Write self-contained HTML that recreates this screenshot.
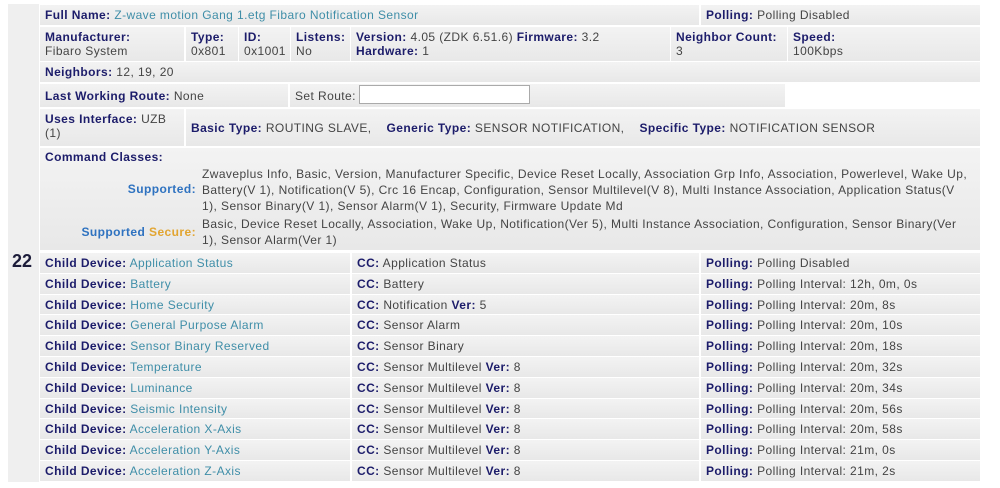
<!DOCTYPE html>
<html><head><meta charset="utf-8"><style>
body{margin:0;width:1000px;height:488px;background:#fff;font-family:"Liberation Sans",Arial,sans-serif;font-size:12px;letter-spacing:0.42px;color:#444;position:relative;overflow:hidden}
.c{position:absolute;background:linear-gradient(#f3f3f3,#e8e8e8);box-sizing:border-box;padding:0 5px;white-space:nowrap;line-height:14px}
b{color:#1c1c6a}
.l{color:#3f8ea8}
</style></head><body>
<div class="c" style="left:8px;top:4px;width:31px;height:478px;background:#efefef"></div>
<div style="position:absolute;left:12px;top:251px;font-weight:bold;font-size:18px;color:#1c1c3a;letter-spacing:0">22</div>

<div class="c" style="left:40px;top:5px;width:659px;height:20px;padding-top:3px"><b>Full Name:</b> <span class="l">Z-wave motion Gang 1.etg Fibaro Notification Sensor</span></div>
<div class="c" style="left:701px;top:5px;width:279px;height:20px;padding-top:3px"><b>Polling:</b> Polling Disabled</div>

<div class="c" style="left:40px;top:27px;width:144px;height:34px;padding-top:3px"><b>Manufacturer:</b><br>Fibaro System</div>
<div class="c" style="left:186px;top:27px;width:52px;height:34px;padding-top:3px"><b>Type:</b><br>0x801</div>
<div class="c" style="left:239px;top:27px;width:51px;height:34px;padding-top:3px"><b>ID:</b><br>0x1001</div>
<div class="c" style="left:291px;top:27px;width:59px;height:34px;padding-top:3px"><b>Listens:</b><br>No</div>
<div class="c" style="left:351px;top:27px;width:319px;height:34px;padding-top:3px"><b>Version:</b> 4.05 (ZDK 6.51.6) <b>Firmware:</b> 3.2<br><b>Hardware:</b> 1</div>
<div class="c" style="left:671px;top:27px;width:116px;height:34px;padding-top:3px"><b>Neighbor Count:</b><br>3</div>
<div class="c" style="left:788px;top:27px;width:192px;height:34px;padding-top:3px"><b>Speed:</b><br>100Kbps</div>

<div class="c" style="left:40px;top:62px;width:940px;height:20px;padding-top:3px"><b>Neighbors:</b> 12, 19, 20</div>

<div class="c" style="left:40px;top:84px;width:248px;height:23px;padding-top:5px"><b>Last Working Route:</b> None</div>
<div class="c" style="left:290px;top:84px;width:495px;height:23px;padding-top:5px">Set Route:</div>
<div style="position:absolute;left:359px;top:85px;width:171px;height:19px;background:#fff;border:1px solid #aaa;box-sizing:border-box"></div>

<div class="c" style="left:40px;top:109px;width:144px;height:37px;padding-top:3px"><b>Uses Interface:</b> UZB<br>(1)</div>
<div class="c" style="left:186px;top:109px;width:794px;height:37px;padding-top:12px;padding-left:5px"><b>Basic Type:</b> ROUTING SLAVE,&nbsp;&nbsp;&nbsp;&nbsp;<b>Generic Type:</b> SENSOR NOTIFICATION,&nbsp;&nbsp;&nbsp;&nbsp;<b>Specific Type:</b> NOTIFICATION SENSOR</div>

<div class="c" style="left:40px;top:148px;width:940px;height:102px"></div>
<div style="position:absolute;left:45px;top:150px;line-height:14px"><b>Command Classes:</b></div>
<div style="position:absolute;left:0;width:196px;text-align:right;top:182px;font-weight:bold;color:#2e72c0">Supported:</div>
<div style="position:absolute;left:202px;top:166px;line-height:16px;white-space:nowrap">Zwaveplus Info, Basic, Version, Manufacturer Specific, Device Reset Locally, Association Grp Info, Association, Powerlevel, Wake Up,<br>Battery(V 1), Notification(V 5), Crc 16 Encap, Configuration, Sensor Multilevel(V 8), Multi Instance Association, Application Status(V<br>1), Sensor Binary(V 1), Sensor Alarm(V 1), Security, Firmware Update Md</div>
<div style="position:absolute;left:0;width:196px;text-align:right;top:225px;font-weight:bold;color:#2e72c0">Supported <span style="color:#e2a531">Secure:</span></div>
<div style="position:absolute;left:202px;top:216px;line-height:16px;white-space:nowrap">Basic, Device Reset Locally, Association, Wake Up, Notification(Ver 5), Multi Instance Association, Configuration, Sensor Binary(Ver<br>1), Sensor Alarm(Ver 1)</div>

<div id="rows"></div>
<script>
var d=[["Application Status","Application Status","","Polling Disabled"],
["Battery","Battery","","Polling Interval: 12h, 0m, 0s"],
["Home Security","Notification","5","Polling Interval: 20m, 8s"],
["General Purpose Alarm","Sensor Alarm","","Polling Interval: 20m, 10s"],
["Sensor Binary Reserved","Sensor Binary","","Polling Interval: 20m, 18s"],
["Temperature","Sensor Multilevel","8","Polling Interval: 20m, 32s"],
["Luminance","Sensor Multilevel","8","Polling Interval: 20m, 34s"],
["Seismic Intensity","Sensor Multilevel","8","Polling Interval: 20m, 56s"],
["Acceleration X-Axis","Sensor Multilevel","8","Polling Interval: 20m, 58s"],
["Acceleration Y-Axis","Sensor Multilevel","8","Polling Interval: 21m, 0s"],
["Acceleration Z-Axis","Sensor Multilevel","8","Polling Interval: 21m, 2s"]];
var h="";
d.forEach(function(r,i){var t=(253+i*20.8).toFixed(1);
h+='<div class="c" style="left:40px;top:'+t+'px;width:310px;height:19.8px;padding-top:3px"><b>Child Device:</b> <span class="l">'+r[0]+'</span></div>';
h+='<div class="c" style="left:352px;top:'+t+'px;width:347px;height:19.8px;padding-top:3px"><b>CC:</b> '+r[1]+(r[2]?' <b>Ver:</b> '+r[2]:'')+'</div>';
h+='<div class="c" style="left:701px;top:'+t+'px;width:279px;height:19.8px;padding-top:3px"><b>Polling:</b> '+r[3]+'</div>';});
document.getElementById("rows").innerHTML=h;
</script>
</body></html>
